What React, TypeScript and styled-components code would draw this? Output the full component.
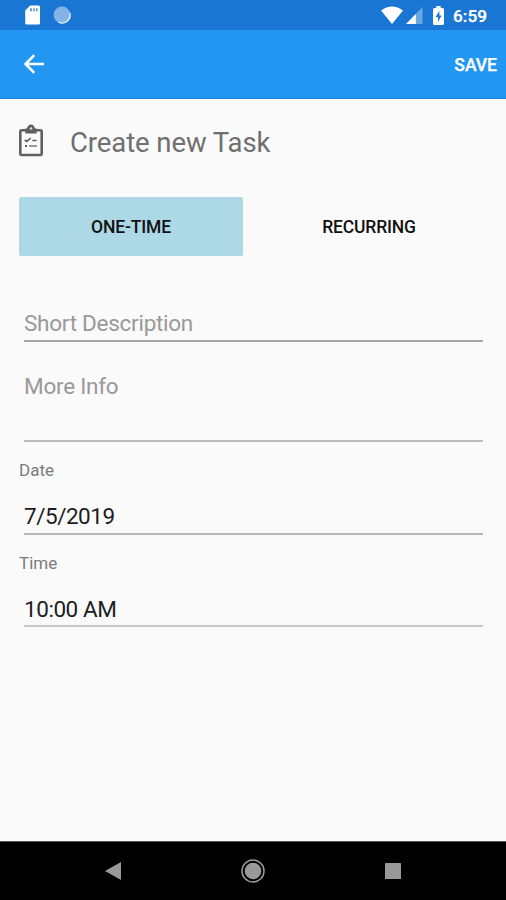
import React from "react";
import styled, { createGlobalStyle } from "styled-components";

const GlobalStyle = createGlobalStyle`
  * { box-sizing: border-box; }
  body { margin: 0; background: #fafafa; }
`;

const Screen = styled.div`
  display: flex;
  flex-direction: column;
  width: 506px;
  height: 900px;
  overflow: hidden;
  background: #fafafa;
  font-family: Roboto, sans-serif;
`;

const StatusBar = styled.header`
  display: flex;
  align-items: center;
  flex: none;
  height: 30px;
  padding: 0 19px 0 25px;
  background: #1976d2;
  color: #fff;
`;

const StatusGroup = styled.div<{ $end?: boolean }>`
  display: flex;
  align-items: center;
  margin-left: ${(p) => (p.$end ? "auto" : "0")};
`;

const StatusIcon = styled.svg<{ $gap: number }>`
  display: block;
  margin-right: ${(p) => p.$gap}px;
`;

const Clock = styled.span`
  width: 34px;
  font-size: 17.2px;
  font-weight: 500;
  line-height: 20px;
  letter-spacing: 0.1px;
  white-space: nowrap;
  padding-top: 1px;
  -webkit-text-stroke: 0.25px #fff;
`;

const Toolbar = styled.nav`
  display: flex;
  align-items: center;
  justify-content: space-between;
  flex: none;
  height: 69px;
  padding: 0 9px 0 23px;
  background: #2196f3;
  border-bottom: 1px solid #1e86df;
`;

const IconButton = styled.button`
  display: flex;
  padding: 0;
  border: 0;
  background: none;
`;

const SaveButton = styled.button`
  padding: 1px 0 0;
  border: 0;
  background: none;
  color: #fff;
  font: 500 17.6px/22px Roboto, sans-serif;
  letter-spacing: -0.05px;
  -webkit-text-stroke: 0.25px #fff;
`;

const Main = styled.main`
  flex: 1;
  padding: 21px 23px 0 19px;
`;

const Heading = styled.div`
  display: flex;
  align-items: center;
  gap: 27px;
  height: 42px;
`;

const ClipboardIcon = styled.svg`
  display: block;
  margin-bottom: 1px;
`;

const Title = styled.h1`
  margin: 4px 0 0;
  color: #6f6f6f;
  font-size: 27.5px;
  font-weight: 400;
  line-height: 36px;
  letter-spacing: -0.08px;
`;

const Tabs = styled.div`
  display: grid;
  grid-template-columns: 224px 224px;
  column-gap: 14px;
  height: 59px;
  margin-top: 35px;
`;

const Tab = styled.button<{ $active?: boolean }>`
  padding: 0;
  border: 0;
  border-radius: 2px;
  background: ${(p) => (p.$active ? "#add8e6" : "transparent")};
  color: #111;
  font: 500 17.5px/22px Roboto, sans-serif;
  letter-spacing: -0.15px;
`;

const Field = styled.div<{ $height: number; $top: number; $line: string }>`
  height: ${(p) => p.$height}px;
  margin: ${(p) => p.$top}px 0 0 5px;
  border-bottom: 2px solid ${(p) => p.$line};
`;

const Value = styled.div<{ $hint?: boolean; $spacing: number }>`
  color: ${(p) => (p.$hint ? "#999" : "#1d1d1d")};
  font-size: 22.5px;
  line-height: 28px;
  letter-spacing: ${(p) => p.$spacing}px;
  white-space: nowrap;
`;

const Label = styled.div`
  margin-top: 18px;
  color: #7b7b7b;
  font-size: 17px;
  line-height: 20px;
`;

const NavBar = styled.footer`
  display: grid;
  grid-template-columns: repeat(3, 140px);
  justify-content: center;
  place-items: center;
  flex: none;
  height: 59px;
  border-top: 1px solid #555;
  background: #000;
`;

export default function App() {
  return (
    <Screen>
      <GlobalStyle />
      <StatusBar>
        <StatusGroup>
          <StatusIcon $gap={12} width="16" height="20" viewBox="0 0 16 20">
            <path fill="#fff" d="M5.2.5H13.4Q15 .5 15 2.1V17.9Q15 19.5 13.4 19.5H1.8Q.2 19.5 .2 17.9V5.5Z" />
            <path fill="#1976d2" opacity=".7" d="M5 3.3h2v3H5zM8.2 3.3h1.7v3H8.2zM11 3.3h1.7v3H11z" />
          </StatusIcon>
          <StatusIcon $gap={0} width="18" height="18" viewBox="0 0 18 18">
            <circle cx="9" cy="9" r="8.4" fill="#83b4e8" />
            <path d="M16.8 7A8 8 0 0 1 5.5 16.2" fill="none" stroke="#e0effc" strokeWidth="1.3" />
          </StatusIcon>
        </StatusGroup>
        <StatusGroup $end>
          <StatusIcon $gap={3} width="22" height="18" viewBox="0 0 22 18">
            <path fill="#fff" d="M0 4.5Q11-3.7 22 4.5L11 18Z" />
          </StatusIcon>
          <StatusIcon $gap={10} width="17" height="17" viewBox="0 0 17 17">
            <path fill="#6aa6e2" d="M16.5 0V17H0Z" />
            <path fill="#fff" d="M9.8 6.9V17H0Z" />
          </StatusIcon>
          <StatusIcon $gap={9} width="11" height="19" viewBox="0 0 11 19">
            <path fill="#fff" d="M3.3 0h4.4v2H9.5Q11 2 11 3.5v14Q11 19 9.5 19h-8Q0 19 0 17.5v-14Q0 2 1.5 2H3.3Z" />
            <path fill="#1976d2" d="M6.4 5L2.5 11H5v5l3.6-6.5H6.4Z" />
          </StatusIcon>
          <Clock>6:59</Clock>
        </StatusGroup>
      </StatusBar>
      <Toolbar>
        <IconButton aria-label="Back">
          <svg width="22" height="20" viewBox="0 0 22 20" fill="none" stroke="#fff" strokeWidth="2.5">
            <path d="M21 10H3M11.3 1.2L2.5 10l8.8 8.8" />
          </svg>
        </IconButton>
        <SaveButton>SAVE</SaveButton>
      </Toolbar>
      <Main>
        <Heading>
          <ClipboardIcon width="24" height="33" viewBox="0 0 24 33" fill="none" stroke="#606060">
            <rect x="1.3" y="6.3" width="21.4" height="24.7" rx="1.5" strokeWidth="2.6" />
            <path d="M6.3 4.5H8Q9 .5 12 .5t4 4h1.7v5H6.3Z" fill="#606060" stroke="none" />
            <circle cx="12" cy="4.5" r="1.3" fill="#ddd" stroke="none" />
            <path d="M5.7 16l2 1.5 4-3.3M13.3 16.5h4.3" strokeWidth="1.7" />
            <path d="M6 22h2" strokeWidth="2" />
            <path d="M10 22h8" stroke="#999" strokeWidth="2" />
          </ClipboardIcon>
          <Title>Create new Task</Title>
        </Heading>
        <Tabs>
          <Tab $active>ONE-TIME</Tab>
          <Tab>RECURRING</Tab>
        </Tabs>
        <Field $top={53} $height={33} $line="#a3a3a3">
          <Value $hint $spacing={-0.27}>Short Description</Value>
        </Field>
        <Field $top={30} $height={70} $line="#bbb">
          <Value $hint $spacing={-0.25}>More Info</Value>
        </Field>
        <Label>Date</Label>
        <Field $top={22} $height={33} $line="#b7b7b7">
          <Value $spacing={-0.48}>7/5/2019</Value>
        </Field>
        <Label>Time</Label>
        <Field $top={22} $height={32} $line="#c6c6c6">
          <Value $spacing={-0.45}>10:00 AM</Value>
        </Field>
      </Main>
      <NavBar>
        <svg width="16" height="18" viewBox="0 0 16 18"><path d="M0 9L16 0V18Z" fill="#999" /></svg>
        <svg width="24" height="24" viewBox="0 0 24 24">
          <circle cx="12" cy="12" r="11" fill="none" stroke="#999" strokeWidth="1.5" />
          <circle cx="12" cy="12" r="8.3" fill="#999" />
        </svg>
        <svg width="16" height="16" viewBox="0 0 16 16"><rect width="16" height="16" rx=".5" fill="#999" /></svg>
      </NavBar>
    </Screen>
  );
}
